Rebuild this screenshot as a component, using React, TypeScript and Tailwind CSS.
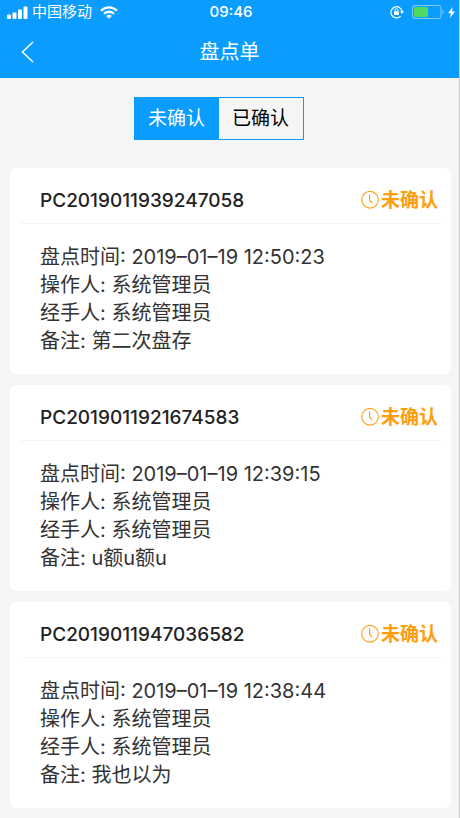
import { useState } from "react";

const ORDERS = [
  { code: "PC2019011939247058", time: "2019–01–19 12:50:23", operator: "系统管理员", handler: "系统管理员", remark: "第二次盘存" },
  { code: "PC2019011921674583", time: "2019–01–19 12:39:15", operator: "系统管理员", handler: "系统管理员", remark: "u额u额u" },
  { code: "PC2019011947036582", time: "2019–01–19 12:38:44", operator: "系统管理员", handler: "系统管理员", remark: "我也以为" },
];

const TABS = ["未确认", "已确认"];

const SignalIcon = () => (
  <svg width="21" height="13" viewBox="0 0 21 13" fill="currentColor" aria-hidden="true">
    <rect x="0" y="8.5" width="4" height="4.5" rx="1" />
    <rect x="5.5" y="6.5" width="4" height="6.5" rx="1" />
    <rect x="11" y="3.5" width="4" height="9.5" rx="1" />
    <rect x="16.5" y="0.5" width="4" height="12.5" rx="1" />
  </svg>
);

const WifiIcon = () => (
  <svg width="18" height="13" viewBox="0 0 18 13" fill="none" stroke="currentColor" strokeWidth="2.3" aria-hidden="true">
    <path d="M1.1 4.7a11.2 11.2 0 0 1 15.8 0" />
    <path d="M4 7.8a7.1 7.1 0 0 1 10 0" />
    <path d="M9 12.8 6.2 10a4 4 0 0 1 5.6 0Z" fill="currentColor" stroke="none" />
  </svg>
);

const RotationLockIcon = () => (
  <svg width="14" height="14" viewBox="0 0 14 14" fill="none" stroke="currentColor" aria-hidden="true">
    <path d="M10.6 11.2A5.6 5.6 0 1 1 12.1 6.4" strokeWidth="1.2" />
    <path d="M10 6.2h4l-2 2.8Z" fill="currentColor" stroke="none" />
    <rect x="4" y="6.2" width="5" height="3.8" rx="0.5" fill="currentColor" stroke="none" />
    <path d="M5 6.4V5.2a1.5 1.5 0 0 1 3 0v1.2" strokeWidth="1" />
  </svg>
);

const BatteryIcon = () => (
  <svg width="33" height="14" viewBox="0 0 33 14" fill="none" aria-hidden="true">
    <rect x="0.5" y="0.5" width="28.5" height="13" rx="2.5" stroke="#84cbff" />
    <rect x="2" y="2" width="14" height="10" rx="1" fill="#4cd964" />
    <path d="M30.5 4.8c1.6.8 1.6 3.6 0 4.4Z" fill="#84cbff" />
  </svg>
);

const BoltIcon = () => (
  <svg width="7" height="11" viewBox="0 0 7 11" fill="currentColor" aria-hidden="true">
    <path d="M4.8 0 0 6.2h2.9L2 11l5-6.4H4Z" />
  </svg>
);

const ClockIcon = () => (
  <svg width="20" height="20" viewBox="0 0 20 20" fill="none" stroke="currentColor" aria-hidden="true">
    <circle cx="9" cy="8.8" r="8.3" strokeWidth="1.1" />
    <path d="M8.6 3.6v5.7l2.8 2.8" strokeWidth="1.2" />
  </svg>
);

const StatusBar = () => (
  <div className="grid h-6 grid-cols-3 items-center pr-1 pl-[7px]">
    <div className="flex items-center gap-1">
      <SignalIcon />
      <span className="text-[15px] leading-6">中国移动</span>
      <span className="pl-1">
        <WifiIcon />
      </span>
    </div>
    <span className="text-center text-[15px] leading-6 font-medium">09:46</span>
    <div className="flex items-center justify-end gap-2">
      <RotationLockIcon />
      <div className="flex items-center gap-[3px]">
        <BatteryIcon />
        <BoltIcon />
      </div>
    </div>
  </div>
);

const OrderCard = ({ order }: { order: (typeof ORDERS)[number] }) => (
  <li className="rounded-md bg-white px-[10px] pb-[19px]">
    <div className="flex h-14 items-center justify-between border-b border-[#f5f5f5] pt-[10px] pr-[3px] pl-5">
      <h2 className="text-[19px] leading-7 font-medium text-[#222]">{order.code}</h2>
      <span className="flex items-center text-[19px] leading-7 font-bold text-[#ff9d0a]">
        <ClockIcon />
        未确认
      </span>
    </div>
    <div className="px-5 pt-[19px] text-[20px] leading-7 text-[#333]">
      <p>盘点时间: {order.time}</p>
      <p>操作人: {order.operator}</p>
      <p>经手人: {order.handler}</p>
      <p>备注: {order.remark}</p>
    </div>
  </li>
);

export default function App() {
  const [active, setActive] = useState(0);

  return (
    <div className="min-h-screen border-r border-[#c8c8c8] bg-[#f5f5f5] font-['Inter','Noto_Sans_CJK_SC',sans-serif]">
      <header className="bg-[#0a9dff] text-white">
        <StatusBar />
        <div className="grid h-[54px] grid-cols-3 items-center px-5 pt-[2px]">
          <button type="button" aria-label="返回" className="w-4">
            <svg width="16" height="22" viewBox="0 0 16 22" fill="none" stroke="currentColor" strokeWidth="1.5">
              <path d="M13 1 2.5 11 13 21" />
            </svg>
          </button>
          <h1 className="text-center text-[20px] leading-7">盘点单</h1>
        </div>
      </header>

      <main className="pt-[19px] pr-2 pb-[10px] pl-[10px]">
        <div className="flex justify-center pr-6">
          <div className="flex w-[170px] border border-[#0a9dff]">
            {TABS.map((tab, index) => (
              <button
                key={tab}
                type="button"
                aria-pressed={active === index}
                onClick={() => setActive(index)}
                className={`h-[41px] flex-1 pt-[2px] text-[19px] ${active === index ? "bg-[#0a9dff] text-white" : "text-black"}`}
              >
                {tab}
              </button>
            ))}
          </div>
        </div>

        <ul className="mt-7 flex flex-col gap-[11px]">
          {ORDERS.map((order) => (
            <OrderCard key={order.code} order={order} />
          ))}
        </ul>
      </main>
    </div>
  );
}
